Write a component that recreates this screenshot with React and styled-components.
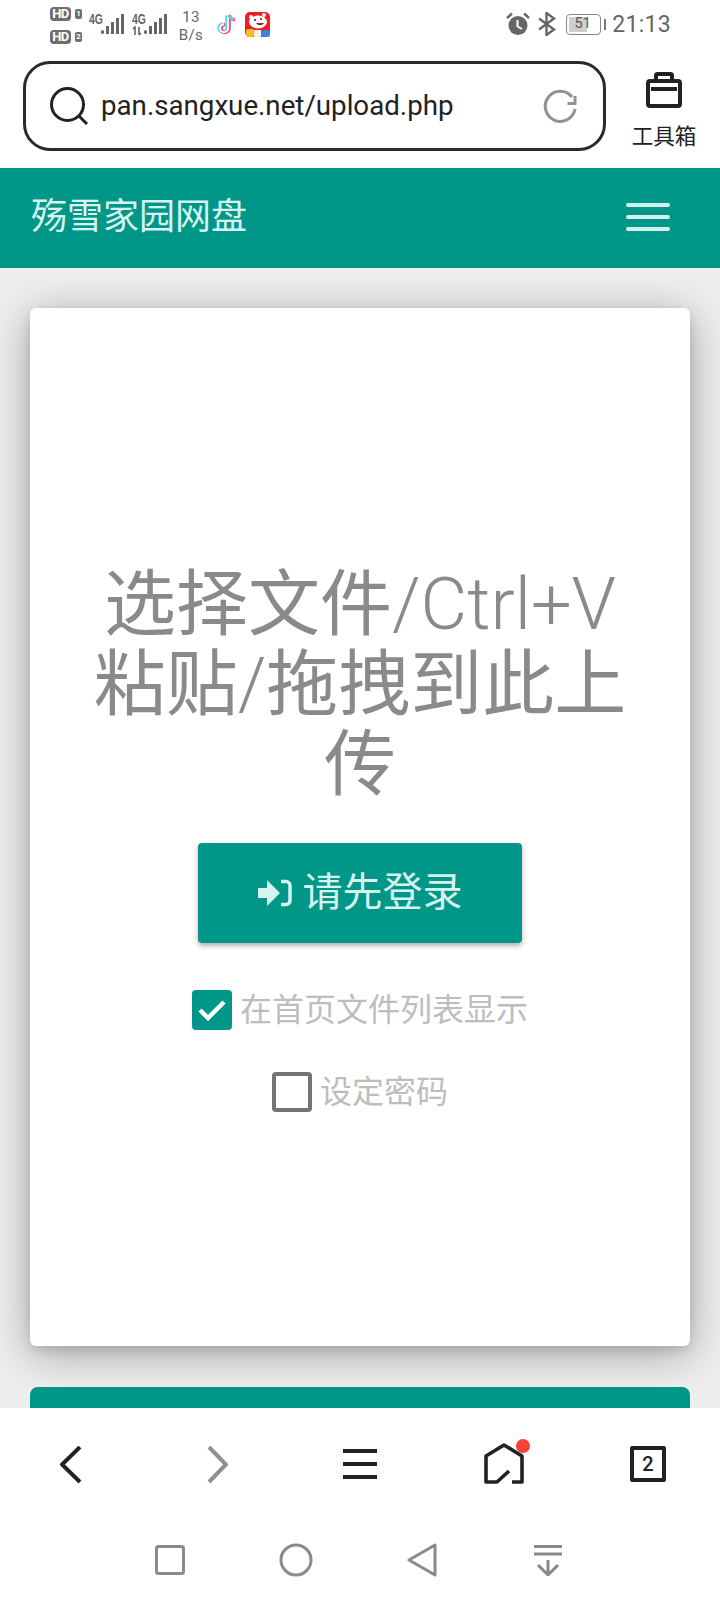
import React from "react";
import styled, { createGlobalStyle } from "styled-components";

const Global = createGlobalStyle`
  html, body { margin: 0; padding: 0; background: #fff; }
  #root { width: 720px; height: 1600px; }
  * { box-sizing: border-box; }
`;
const FONT = `Roboto, "Noto Sans CJK SC", sans-serif`;

const Page = styled.div`
  width: 720px; height: 1600px; display: flex; flex-direction: column;
  overflow: hidden; background: #fff; font-family: ${FONT};
`;
const StatusBar = styled.div`
  height: 56px; flex: none; display: flex; align-items: flex-start;
  justify-content: space-between; padding: 7px 50px 0 50px; color: #666;
`;
const StatusGroup = styled.div`display: flex; align-items: flex-start;`;
const SimStack = styled.div`display: flex; flex-direction: column; gap: 9px; width: 39px; flex: none;`;
const SimRow = styled.div`display: flex; align-items: center; gap: 4px;`;
const HdBadge = styled.span`
  width: 21px; height: 14px; border-radius: 4px; background: #6e6e6e; color: #fff;
  font: 700 13px/14px ${FONT}; text-align: center; letter-spacing: -.5px;
`;
const SimBadge = styled.span`
  width: 7px; height: 10px; border-radius: 2px; background: #6e6e6e; color: #fff;
  font: 700 8px/10px ${FONT}; text-align: center;
`;
const Signal = styled.div`
  position: relative; width: ${p => p.$w}px; height: 36px; margin-right: ${p => p.$mr}px; flex: none;
`;
const NetLabel = styled.span`
  position: absolute; left: 0; top: 5px; font: 700 14px/14px "Liberation Sans", sans-serif;
  color: #666; transform: scaleX(.75); transform-origin: left;
`;
const Speed = styled.div`
  width: 36px; flex: none; margin-right: 7px; text-align: center; color: #666;
  font: 400 15px/18px ${FONT}; letter-spacing: .4px; margin-top: 1px;
`;
const StatusIcon = styled.svg`display: block; flex: none; margin: ${p => p.$m || 0};`;
const Battery = styled.div`
  width: 35px; height: 21px; margin: 7px 2px 0 0; border: 1.5px solid #888; border-radius: 4px; padding: 2px;
  position: relative; flex: none;
`;
const BatteryFill = styled.div`
  width: 18px; height: 100%; background: #cfcfcf; border-radius: 1px;
`;
const BatteryLabel = styled.span`
  position: absolute; left: 0; right: 2px; top: 0; text-align: center; font: 400 14.5px/18px ${FONT}; color: #555;
`;
const BatteryTip = styled.div`
  width: 2px; height: 11px; background: #777; margin: 12px 6px 0 1px; flex: none;
`;
const Clock = styled.div`font: 400 23px/27px ${FONT}; color: #666; margin-top: 4px; margin-right: -1px; letter-spacing: .3px;`;

const AddressRow = styled.div`
  height: 112px; flex: none; display: flex; align-items: flex-start; padding: 5px 0 0 23px;
`;
const AddressBox = styled.div`
  width: 583px; height: 90px; border: 3px solid #2a2a2a; border-radius: 27px; flex: none;
  display: flex; align-items: center; padding: 0 26px 0 24px;
`;
const Url = styled.div`
  flex: 1; margin-left: 13px; font: 400 27.7px/32px ${FONT}; color: #222; white-space: nowrap;
`;
const Tool = styled.div`
  width: 64px; margin-left: 26px; flex: none; display: flex; flex-direction: column; align-items: center;
  padding-top: 11px;
`;
const ToolLabel = styled.div`font: 400 21.5px/24px ${FONT}; color: #222; margin-top: 17px; white-space: nowrap;`;

const Main = styled.div`flex: 1; min-height: 0; overflow: hidden; background: #eee;`;
const TopBar = styled.header`
  height: 100px; background: #009688; display: flex; align-items: center;
  justify-content: space-between; padding: 0 50px 0 31px;
`;
const Brand = styled.div`font: 400 36px/40px ${FONT}; color: #d6f3ef; margin-top: -2px;`;
const Burger = styled.div`display: flex; flex-direction: column; gap: 8px; width: 44px; margin-top: -2px;`;
const BurgerBar = styled.div`height: 4px; border-radius: 2px; background: #d2f1ed;`;

const Content = styled.div`padding: 40px 30px 0;`;
const Card = styled.section`
  height: 1038px; background: #fff; border-radius: 6px;
  box-shadow: 0 8px 44px rgba(0,0,0,.32), 0 4px 12px rgba(0,0,0,.12);
  display: flex; flex-direction: column; align-items: center; justify-content: center;
  padding: 23px 60px 0;
`;
const NextCard = styled.div`
  height: 60px; margin-top: 41px; background: #009688; border-radius: 8px 8px 0 0;
`;
const Title = styled.h1`
  margin: 0; font: 400 72px/80px ${FONT}; color: #8a8a8a; text-align: center; width: 100%;
`;
const LightText = styled.span`font-weight: 300;`;
const LoginButton = styled.button`
  width: 324px; height: 100px; margin-top: 38px; border: 0; border-radius: 4px; background: #009688;
  color: #d6f3ef; font: 400 40px/44px ${FONT}; display: flex; align-items: center; justify-content: center; gap: 11px;
  box-shadow: 0 3px 5px rgba(0,0,0,.3); padding: 0;
`;
const CheckRow = styled.label`
  display: flex; align-items: center; gap: 8px; margin-top: ${p => p.$mt}px;
  font: 400 32px/40px ${FONT}; color: #bdbdbd; white-space: nowrap;
`;
const CheckBox = styled.span`
  width: 40px; height: 40px; border-radius: 4px; flex: none; display: flex; align-items: center; justify-content: center;
  background: ${p => (p.$checked ? "#009688" : "#fff")};
  border: ${p => (p.$checked ? "0" : "4px solid #757575")};
`;

const BottomNav = styled.nav`
  height: 192px; flex: none; background: #fff; display: flex; flex-direction: column;
`;
const BrowserBar = styled.div`
  display: grid; grid-template-columns: repeat(5, 144px); height: 112px; padding-top: 38px;
`;
const NavCell = styled.div`display: flex; justify-content: center; align-items: flex-start;`;
const HomeWrap = styled.div`position: relative; width: 44px; height: 42px; margin-top: -3px;`;
const HomeDot = styled.span`
  position: absolute; right: -4px; top: -4px; width: 14px; height: 14px; border-radius: 50%; background: #f44336;
`;
const TabBox = styled.div`
  width: 36px; height: 36px; border: 4px solid #222; border-radius: 2px; color: #222;
  font: 500 20px/28px ${FONT}; text-align: center;
`;
const SysBar = styled.div`
  display: grid; grid-template-columns: repeat(4, 126px); justify-content: center; padding-top: 25px; margin-left: -2px;
`;

const Bars = ({ x = 0 }) => (
  <svg width="23" height="22" viewBox="0 0 23 22" style={{ position: "absolute", left: x, top: 6 }}>
    <rect x="0" y="17" width="3" height="4" rx="1.5" fill="#666" />
    <rect x="5" y="13" width="3" height="8" fill="#666" />
    <rect x="10" y="9" width="3" height="12" fill="#666" />
    <rect x="15" y="5" width="3" height="16" fill="#666" />
    <rect x="20" y="1" width="3" height="20" fill="#666" />
  </svg>
);

export default function App() {
  return (
    <Page>
      <Global />
      <StatusBar>
        <StatusGroup>
          <SimStack>
            <SimRow><HdBadge>HD</HdBadge><SimBadge>1</SimBadge></SimRow>
            <SimRow><HdBadge>HD</HdBadge><SimBadge>2</SimBadge></SimRow>
          </SimStack>
          <Signal $w={35} $mr={8}>
            <NetLabel>4G</NetLabel>
            <Bars x={12} />
          </Signal>
          <Signal $w={35} $mr={6}>
            <NetLabel>4G</NetLabel>
            <svg width="13" height="10" viewBox="0 0 13 10" style={{ position: "absolute", left: 0, top: 19 }}>
              <path d="M3 9V1L1 3M7 1v8M7 9l2-2" stroke="#666" strokeWidth="1.6" fill="none" />
            </svg>
            <Bars x={12} />
          </Signal>
          <Speed>13<br />B/s</Speed>
          <StatusIcon width="21" height="23" viewBox="0 0 21 23" $m="6px 8px 0 0">
            <path d="M12 2v12.500a4 4 0 1 1-4-4" stroke="#4fe0e6" strokeWidth="3.600" fill="none" transform="translate(-1 .5)" />
            <path d="M12 2v12.500a4 4 0 1 1-4-4" stroke="#f8497a" strokeWidth="3.600" fill="none" transform="translate(1 1)" />
            <path d="M12 2v12.500a4 4 0 1 1-4-4" stroke="#fff" strokeWidth="2" fill="none" transform="translate(0 .7)" />
            <path d="M13.500 2c.5 3 2.500 4.500 5.500 5" stroke="#f8497a" strokeWidth="3" fill="none" />
            <path d="M12.500 1.500c.5 3 2.500 4.500 5.500 5" stroke="#4fe0e6" strokeWidth="2" fill="none" />
          </StatusIcon>
          <StatusIcon width="25" height="25" viewBox="0 0 25 25" $m="5px 0 0 0">
            <rect width="25" height="25" rx="5" fill="#ee1c25" />
            <ellipse cx="13" cy="10" rx="9" ry="6.500" fill="#fff" />
            <path d="M11 11c2 3 6 3 8 0z" fill="#b3121a" />
            <circle cx="6" cy="5" r="2" fill="#fff" />
            <circle cx="19" cy="3" r="2" fill="#fff" />
            <circle cx="10" cy="8" r="1" fill="#222" />
            <circle cx="16" cy="7" r="1" fill="#222" />
            <rect x="1" y="17" width="8" height="8" rx="2" fill="#fbb829" />
            <rect x="9" y="18" width="7" height="7" fill="#f5efe6" />
            <rect x="16" y="18" width="9" height="7" rx="2" fill="#3f7fe0" />
          </StatusIcon>
        </StatusGroup>
        <StatusGroup>
          <StatusIcon width="24" height="24" viewBox="0 0 24 24" $m="5px 7px 0 0">
            <circle cx="12" cy="13.500" r="9.500" fill="#666" />
            <path d="M11.500 8v6.500l4.500 2.500" stroke="#fff" strokeWidth="2" fill="none" />
            <path d="M1 6l5-4.500M23 6l-5-4.500" stroke="#666" strokeWidth="2.400" fill="none" />
          </StatusIcon>
          <StatusIcon width="20" height="24" viewBox="0 0 20 24" $m="5px 9px 0 0">
            <path d="M2 6.500l15 11-7.500 5.500V1l7.500 5.500L2 17.500" stroke="#666" strokeWidth="2.400" fill="none" />
          </StatusIcon>
          <Battery><BatteryFill /><BatteryLabel>51</BatteryLabel></Battery>
          <BatteryTip />
          <Clock>21:13</Clock>
        </StatusGroup>
      </StatusBar>

      <AddressRow>
        <AddressBox>
          <svg width="38" height="38" viewBox="0 0 38 38" style={{ flex: "none" }}>
            <circle cx="17.500" cy="17.500" r="16" stroke="#222" strokeWidth="3" fill="none" />
            <path d="M28 28l9 9" stroke="#222" strokeWidth="3" fill="none" />
          </svg>
          <Url>pan.sangxue.net/upload.php</Url>
          <svg width="34" height="34" viewBox="0 0 34 34" style={{ flex: "none" }}>
            <path d="M32 20A15 15 0 1 1 29 8" stroke="#929292" strokeWidth="3" fill="none" />
            <path d="M32 7v7.500h-7.500" stroke="#929292" strokeWidth="3" fill="none" />
          </svg>
        </AddressBox>
        <Tool>
          <svg width="36" height="36" viewBox="0 0 36 36">
            <rect x="2" y="9" width="32" height="25" rx="2" stroke="#222" strokeWidth="4" fill="none" />
            <path d="M10 9V3.500A1.500 1.500 0 0 1 11.500 2h13A1.500 1.500 0 0 1 26 3.500V9" stroke="#222" strokeWidth="4" fill="none" />
            <rect x="5" y="15" width="26" height="4" fill="#222" />
          </svg>
          <ToolLabel>工具箱</ToolLabel>
        </Tool>
      </AddressRow>

      <Main>
        <TopBar>
          <Brand>殇雪家园网盘</Brand>
          <Burger><BurgerBar /><BurgerBar /><BurgerBar /></Burger>
        </TopBar>
        <Content>
          <Card>
            <Title>选择文件<LightText>/Ctrl+V</LightText>粘贴<LightText>/</LightText>拖拽到此上传</Title>
            <LoginButton>
              <svg width="34" height="28" viewBox="0 0 34 28">
                <path d="M0 9h9V1l13 13-13 13v-8H0z" fill="#d6f3ef" />
                <path d="M23 2.500h5a4 4 0 0 1 4 4v15a4 4 0 0 1-4 4h-5" stroke="#d6f3ef" strokeWidth="3.500" fill="none" />
              </svg>
              请先登录
            </LoginButton>
            <CheckRow $mt={47}>
              <CheckBox $checked>
                <svg width="28" height="22" viewBox="0 0 28 22">
                  <path d="M2 11l8 8L26 3" stroke="#fff" strokeWidth="4.500" fill="none" />
                </svg>
              </CheckBox>
              在首页文件列表显示
            </CheckRow>
            <CheckRow $mt={42}>
              <CheckBox />
              设定密码
            </CheckRow>
          </Card>
          <NextCard />
        </Content>
      </Main>

      <BottomNav>
        <BrowserBar>
          <NavCell>
            <svg width="24" height="38" viewBox="0 0 24 38">
              <path d="M20 1L2 18.500 20 36" stroke="#222" strokeWidth="4" fill="none" />
            </svg>
          </NavCell>
          <NavCell>
            <svg width="24" height="38" viewBox="0 0 24 38">
              <path d="M5 1l17 17.500L5 36" stroke="#8f8f8f" strokeWidth="4" fill="none" />
            </svg>
          </NavCell>
          <NavCell>
            <svg width="36" height="36" viewBox="0 0 36 36">
              <path d="M1 5h34M1 18h34M1 31h34" stroke="#222" strokeWidth="4" fill="none" />
            </svg>
          </NavCell>
          <NavCell>
            <HomeWrap>
              <svg width="44" height="42" viewBox="0 0 44 42">
                <path d="M28 39h10V13L20 2 2 13v26h11l12-11" stroke="#222" strokeWidth="3.600" fill="none" strokeLinejoin="round" transform="translate(2 0)" />
              </svg>
              <HomeDot />
            </HomeWrap>
          </NavCell>
          <NavCell><TabBox>2</TabBox></NavCell>
        </BrowserBar>
        <SysBar>
          <NavCell>
            <svg width="30" height="30" viewBox="0 0 30 30">
              <rect x="1.500" y="1.500" width="27" height="27" rx="2" stroke="#8a8a8a" strokeWidth="3" fill="none" />
            </svg>
          </NavCell>
          <NavCell>
            <svg width="34" height="34" viewBox="0 0 34 34" style={{ marginTop: -2 }}>
              <circle cx="17" cy="17" r="15" stroke="#8a8a8a" strokeWidth="3" fill="none" />
            </svg>
          </NavCell>
          <NavCell>
            <svg width="30" height="34" viewBox="0 0 30 34" style={{ marginTop: -2 }}>
              <path d="M28 2v30L2 17z" stroke="#8a8a8a" strokeWidth="3" fill="none" strokeLinejoin="round" />
            </svg>
          </NavCell>
          <NavCell>
            <svg width="28" height="31" viewBox="0 0 28 31">
              <path d="M0 1.500h28M0 9h28M14 15v15M4 20l10 10 10-10" stroke="#8a8a8a" strokeWidth="3" fill="none" />
            </svg>
          </NavCell>
        </SysBar>
      </BottomNav>
    </Page>
  );
}
